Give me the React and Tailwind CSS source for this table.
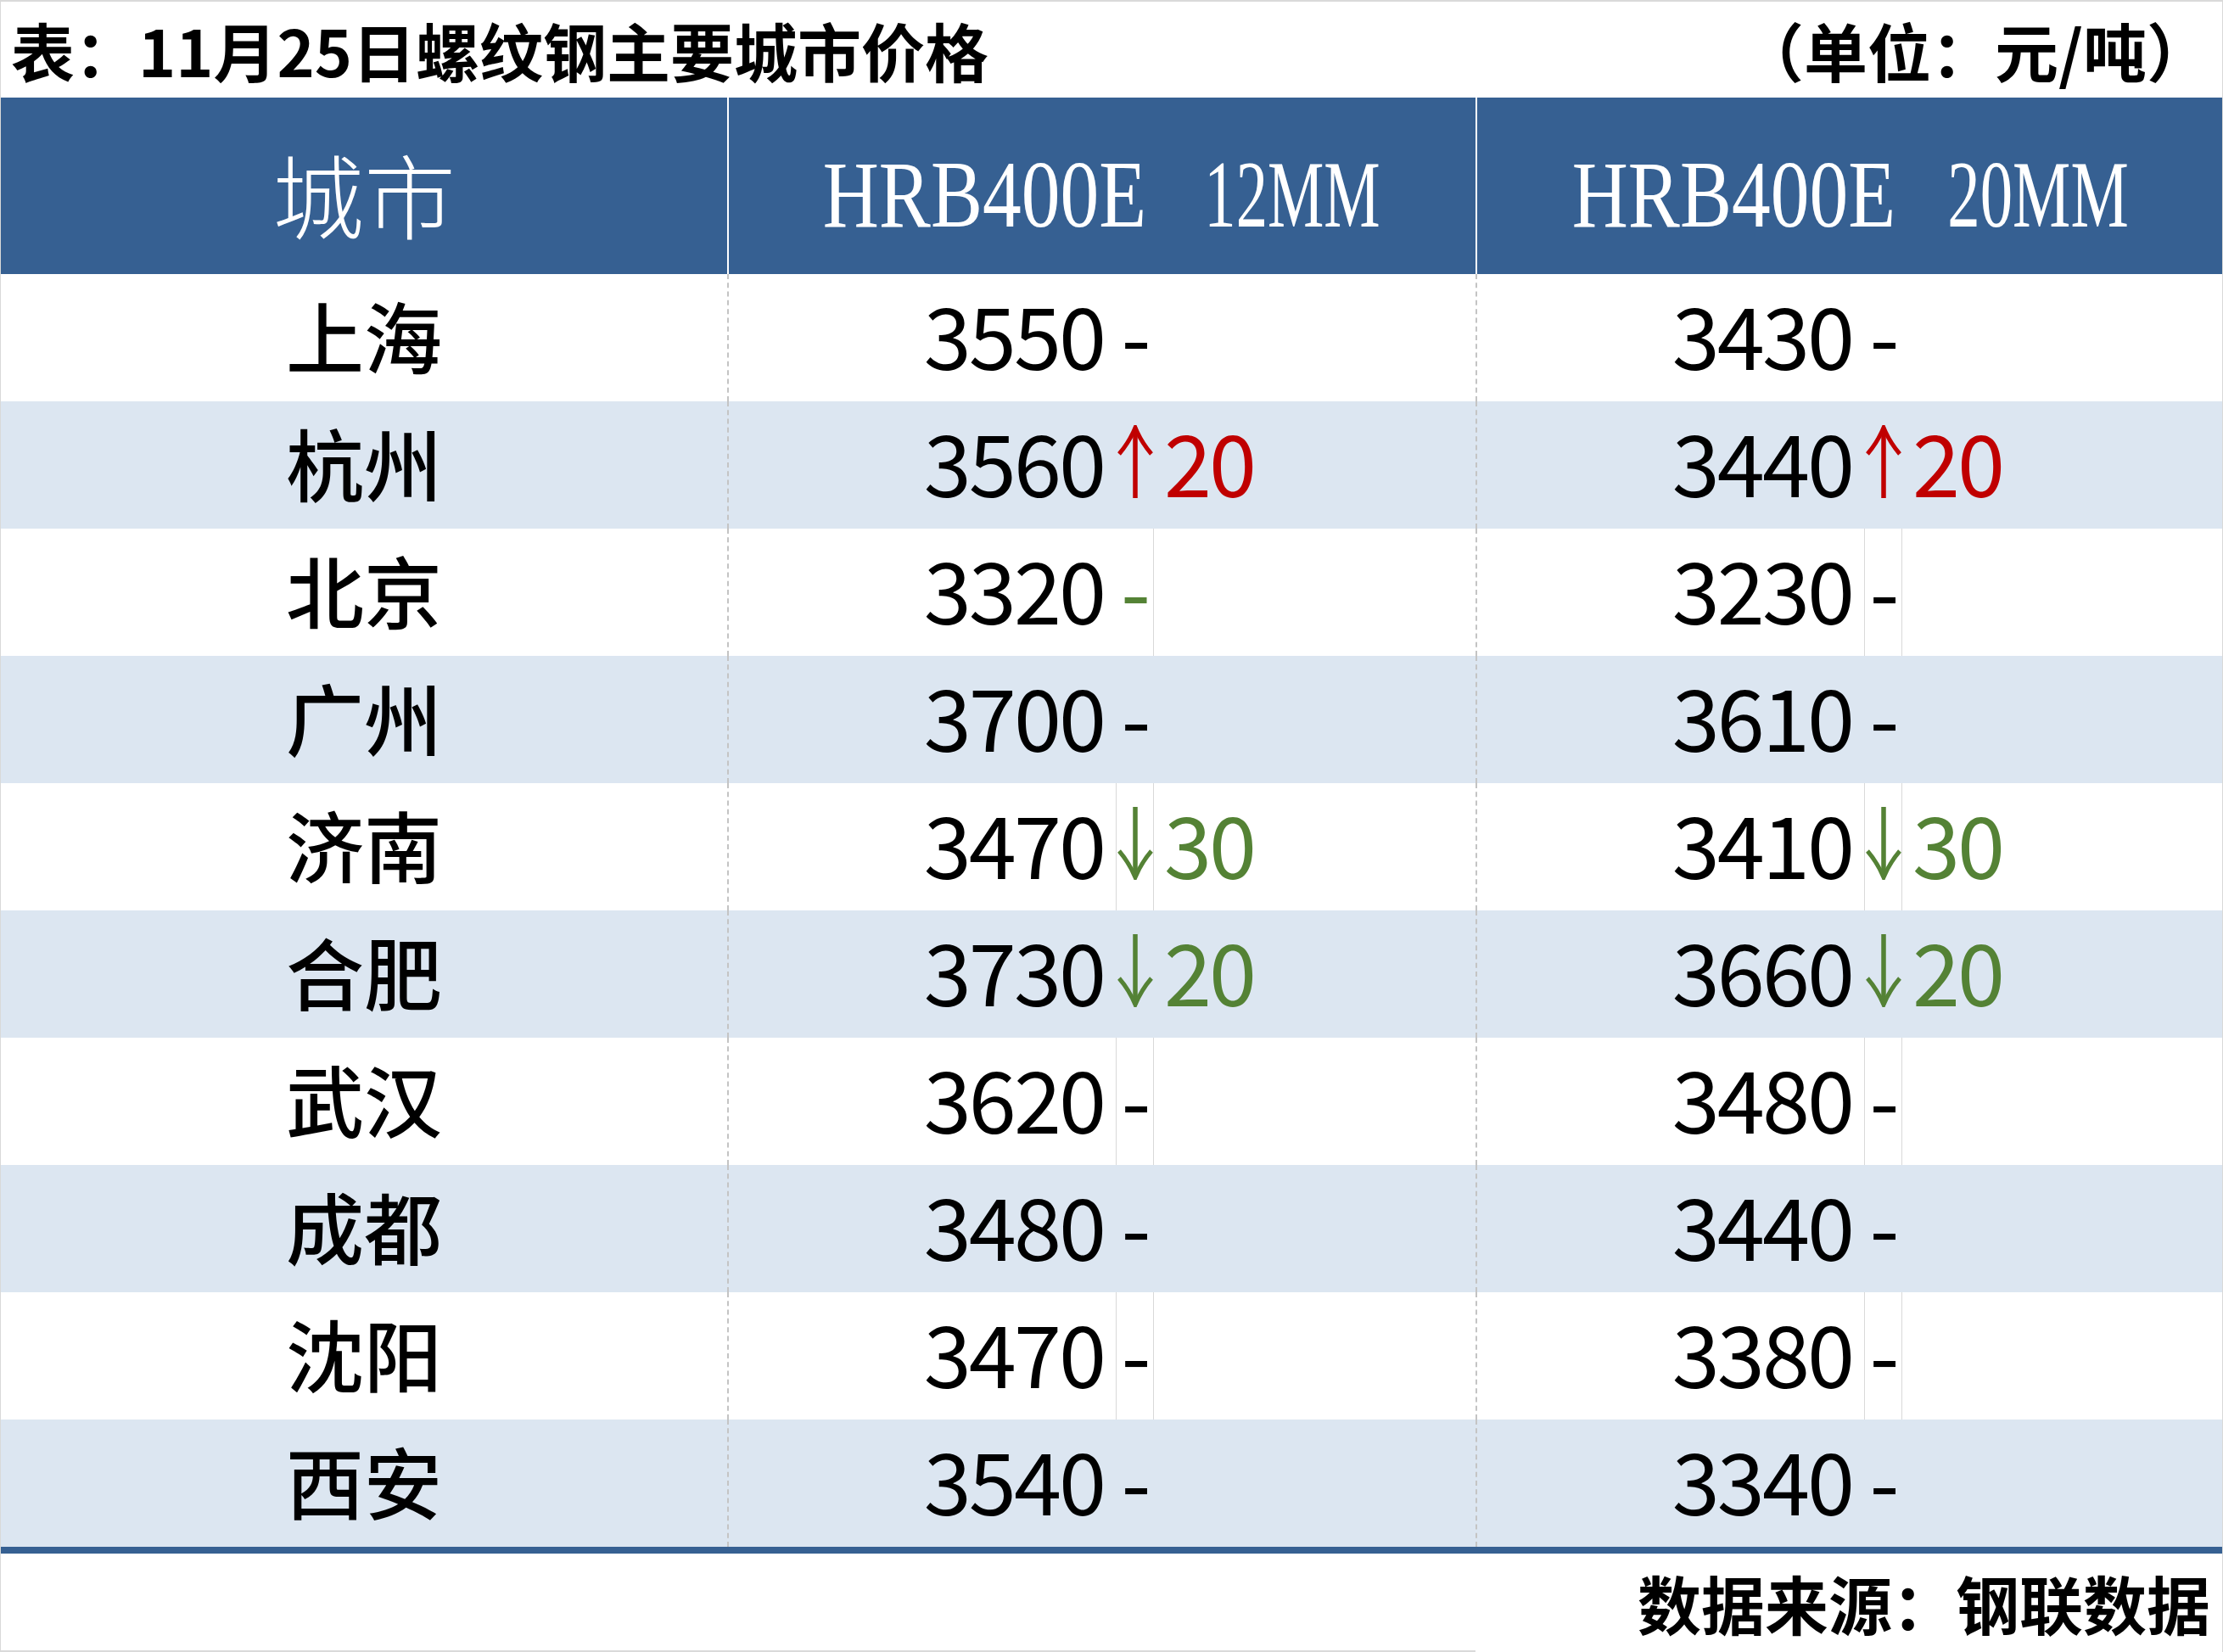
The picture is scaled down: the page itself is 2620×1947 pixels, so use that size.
import React from 'react';

const rows = [
  { city: '上海', a: { v: '3550', d: 'flat' }, b: { v: '3430', d: 'flat' } },
  { city: '杭州', a: { v: '3560', d: 'up', n: '20' }, b: { v: '3440', d: 'up', n: '20' } },
  { city: '北京', a: { v: '3320', d: 'flatGreen', grid: 'r' }, b: { v: '3230', d: 'flat', grid: 'lr' } },
  { city: '广州', a: { v: '3700', d: 'flat' }, b: { v: '3610', d: 'flat' } },
  { city: '济南', a: { v: '3470', d: 'down', n: '30', grid: 'lr' }, b: { v: '3410', d: 'down', n: '30', grid: 'lr' } },
  { city: '合肥', a: { v: '3730', d: 'down', n: '20' }, b: { v: '3660', d: 'down', n: '20' } },
  { city: '武汉', a: { v: '3620', d: 'flat', grid: 'lr' }, b: { v: '3480', d: 'flat', grid: 'lr' } },
  { city: '成都', a: { v: '3480', d: 'flat' }, b: { v: '3440', d: 'flat' } },
  { city: '沈阳', a: { v: '3470', d: 'flat', grid: 'lr' }, b: { v: '3380', d: 'flat', grid: 'lr' } },
  { city: '西安', a: { v: '3540', d: 'flat' }, b: { v: '3340', d: 'flat' } },
];

// thin arrow with a curved open head, pointing up
const Arrow = ({ down, color }) => (
  <svg
    width="42"
    height="86"
    viewBox="0 0 42 86"
    className={down ? 'rotate-180' : ''}
    fill="none"
    stroke={color}
  >
    <path d="M21 3 L21 86" strokeWidth="5.5" />
    <path d="M2 34 Q14 20 21 3 Q28 20 40 34" strokeWidth="5" />
  </svg>
);

const PriceCell = ({ p }) => {
  const grid =
    p.grid === 'lr'
      ? 'border-x border-[#d9d9d9]'
      : p.grid === 'r'
      ? 'border-r border-[#d9d9d9]'
      : '';
  return (
    <div className="h-full flex items-stretch border-l-2 border-dashed border-[#c4c4c4] text-[101px] leading-none tracking-[-3px]">
      <div className="w-[456px] flex items-center justify-end pr-[14px] pb-[12px]">{p.v}</div>
      <div className={`w-[45px] flex items-center justify-center pb-[8px] ${grid}`}>
        {p.d === 'flat' && <span className="pb-[4px]">-</span>}
        {p.d === 'flatGreen' && <span className="pb-[4px] text-[#548235]">-</span>}
        {p.d === 'up' && <Arrow color="#c00000" />}
        {p.d === 'down' && <Arrow down color="#548235" />}
      </div>
      <div
        className={`flex items-center pl-[12px] pb-[12px] ${
          p.d === 'up' ? 'text-[#c00000]' : 'text-[#548235]'
        }`}
      >
        {p.n}
      </div>
    </div>
  );
};

const SpecHead = ({ a, b, gap, sa, sb }) => (
  <div className="h-full flex items-center justify-center border-l-2 border-white pt-[18px] font-['Liberation_Serif',serif] text-[113px] leading-none text-white">
    <div className="w-[379px] flex justify-center">
      <span className={`inline-block whitespace-nowrap ${sa}`}>{a}</span>
    </div>
    <div className={gap} />
    <div className="w-[210px] flex justify-center">
      <span className={`inline-block whitespace-nowrap ${sb}`}>{b}</span>
    </div>
  </div>
);

export default function App() {
  return (
    <div className="w-[2620px] h-[1947px] bg-white border-t-2 border-x border-[#d9d9d9] flex flex-col font-['Noto_Sans_CJK_SC','Noto_Sans_CJK_JP',sans-serif] text-black">
      <div className="h-[113px] flex items-center justify-between pl-[12px] pr-[14px] text-[75px] font-bold leading-none">
        <span>表：11月25日螺纹钢主要城市价格</span>
        <span>（单位：元/吨）</span>
      </div>

      <div className="h-[208px] grid grid-cols-[856px_882px_1fr] bg-[#366092]">
        <div className="flex items-center justify-center pt-[16px] text-white text-[108px] font-light leading-none">
          城市
        </div>
        <SpecHead a="HRB400E" b="12MM" gap="w-[68px]" sa="scale-x-[0.81]" sb="scale-x-[0.66]" />
        <SpecHead a="HRB400E" b="20MM" gap="w-[64px]" sa="scale-x-[0.81]" sb="scale-x-[0.68]" />
      </div>

      {rows.map((r, i) => (
        <div
          key={r.city}
          className={`h-[150px] grid grid-cols-[856px_882px_1fr] ${
            i % 2 === 1 ? 'bg-[#dce6f1]' : 'bg-white'
          }`}
        >
          <div className="flex items-center justify-center pb-[8px] text-[92px] font-medium leading-none">
            {r.city}
          </div>
          <PriceCell p={r.a} />
          <PriceCell p={r.b} />
        </div>
      ))}

      <div className="h-[8px] bg-[#366092]" />

      <div className="flex-1 flex flex-col">
        <div className="flex-1 flex items-center justify-end pr-[14px] text-[75px] font-bold leading-none">
          数据来源：钢联数据
        </div>
        <div className="w-[1738px] h-[2px] bg-[#d9d9d9]" />
      </div>
    </div>
  );
}
